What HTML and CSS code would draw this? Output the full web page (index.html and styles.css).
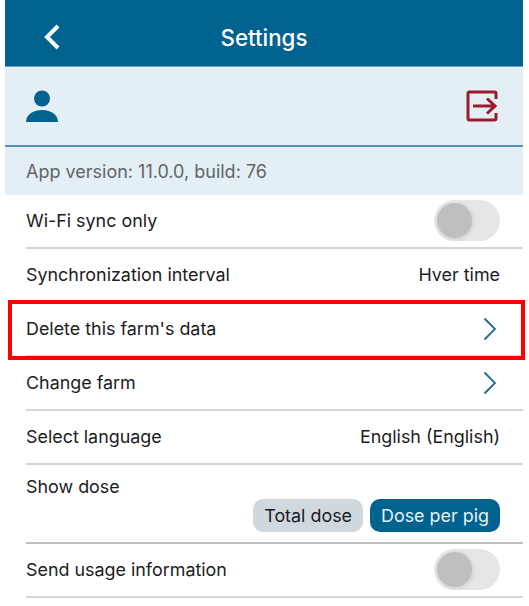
FILE: index.html
```html
<!DOCTYPE html>
<html lang="en">
<head>
  <meta charset="UTF-8" />
  <meta name="viewport" content="width=device-width, initial-scale=1" />
  <title>Settings</title>
  <link rel="stylesheet" href="styles.css">
</head>
<body>
  <div class="notch"></div>
  <div class="app">
    <header class="topbar">
      <svg class="back" width="20" height="28" viewBox="0 0 20 28"><path d="M16 3 L5 14 L16 25" fill="none" stroke="#fff" stroke-width="4"/></svg>
      <h1>Settings</h1>
    </header>

    <div class="profile">
      <svg width="32" height="32" viewBox="0 0 32 32"><circle cx="16" cy="8.500" r="8" fill="#00628f"/><path d="M0 32 C0 24 8 20 16 20 C24 20 32 24 32 32 Z" fill="#00628f"/></svg>
      <svg width="32" height="32" viewBox="0 0 32 32" fill="none" stroke="#9b1b2a" stroke-width="3"><path d="M30 9 V3.500 Q30 2 28.500 2 H3.500 Q2 2 2 3.500 V28.500 Q2 30 3.500 30 H28.500 Q30 30 30 28.500 V23"/><path d="M7 16 H29 M21 8.500 L29 16 L21 23.500"/></svg>
    </div>

    <div class="version">App version: 11.0.0, build: 76</div>

    <ul class="rows">
      <li class="row">
        <div class="row-inner"><span>Wi-Fi sync only</span><span class="toggle"></span></div>
      </li>
      <li class="row">
        <div class="row-inner"><span>Synchronization interval</span><span>Hver time</span></div>
      </li>
      <li class="row marked">
        <div class="row-inner"><span>Delete this farm's data</span>
          <svg class="chev" width="14" height="24" viewBox="0 0 14 24"><path d="M1.500 1.500 L12 12 L1.500 22.500" fill="none" stroke="#1d6c96" stroke-width="1.800"/></svg>
        </div>
        <div class="redbox"></div>
      </li>
      <li class="row">
        <div class="row-inner"><span>Change farm</span>
          <svg class="chev" width="14" height="24" viewBox="0 0 14 24"><path d="M1.500 1.500 L12 12 L1.500 22.500" fill="none" stroke="#1d6c96" stroke-width="1.800"/></svg>
        </div>
      </li>
      <li class="row">
        <div class="row-inner"><span>Select language</span><span>English (English)</span></div>
      </li>
      <li class="row dose">
        <div class="dose-inner">
          <span>Show dose</span>
          <div class="pills">
            <span class="pill">Total dose</span>
            <span class="pill on">Dose per pig</span>
          </div>
        </div>
      </li>
      <li class="row">
        <div class="row-inner"><span class="lifted">Send usage information</span><span class="toggle"></span></div>
      </li>
    </ul>
  </div>
</body>
</html>
```

FILE: styles.css
```css
body {
  margin: 0;
  background: #fff;
  font-family: Inter, "Liberation Sans", sans-serif;
  color: #1c1c1e;
  overflow: hidden;
  height: 606px;
  position: relative;
}
.notch {
  position: absolute;
  top: 0;
  left: 148px;
  width: 248px;
  height: 2px;
  background: #0a0f14;
  border-radius: 0 0 6px 6px;
}
.app {
  margin-left: 5px;
  width: 518px;
}
.topbar {
  height: 66px;
  background: #00628f;
  border-bottom: 1px solid #6ba3bf;
  display: flex;
  align-items: center;
  justify-content: center;
  position: relative;
}
.topbar h1 {
  margin: 0;
  padding-top: 8px;
  font-size: 22.300px;
  font-weight: 500;
  color: #fff;
}
.back {
  position: absolute;
  left: 37px;
  top: 23px;
}
.profile {
  height: 80px;
  background: #e3eff4;
  border-bottom: 2px solid #4f93b2;
  display: flex;
  align-items: center;
  justify-content: space-between;
  padding: 0 25px 0 21px;
  box-sizing: border-box;
}
.version {
  height: 48px;
  background: #e3eff4;
  color: #626468;
  font-size: 18px;
  line-height: 50px;
  padding-left: 21px;
}
.rows {
  list-style: none;
  margin: 0;
  padding: 0;
}
.row {
  padding-left: 21px;
  position: relative;
  font-size: 17.900px;
}
.row-inner {
  height: 51px;
  padding-bottom: 1px;
  border-bottom: 2px solid #d6d6d8;
  display: flex;
  align-items: center;
  justify-content: space-between;
  padding-right: 23px;
}
.lifted {
  margin-bottom: 1px;
}
.toggle {
  width: 66px;
  height: 41px;
  border-radius: 21px;
  background: #e5e6e8;
  position: relative;
}
.toggle::before {
  content: "";
  position: absolute;
  left: 3px;
  top: 3px;
  width: 35px;
  height: 35px;
  border-radius: 50%;
  background: #bfbfc1;
  box-shadow: 1px 1px 4px rgba(0, 0, 0, 0.12);
}
.chev {
  margin-right: 3px;
}
.redbox {
  position: absolute;
  left: 3px;
  right: -2px;
  top: -3px;
  bottom: -3px;
  border: 4px solid #ff0000;
  pointer-events: none;
}
.dose-inner {
  height: 66px;
  border-bottom: 2px solid #bfc0c2;
  padding: 11px 23px 0 0;
}
.pills {
  display: flex;
  justify-content: flex-end;
  gap: 7px;
  margin-top: 2px;
}
.pill {
  height: 33px;
  line-height: 33px;
  padding: 0 11px;
  border-radius: 10px;
  background: #cfd8df;
}
.pill.on {
  background: #00628f;
  color: #e6f1f6;
}
```
